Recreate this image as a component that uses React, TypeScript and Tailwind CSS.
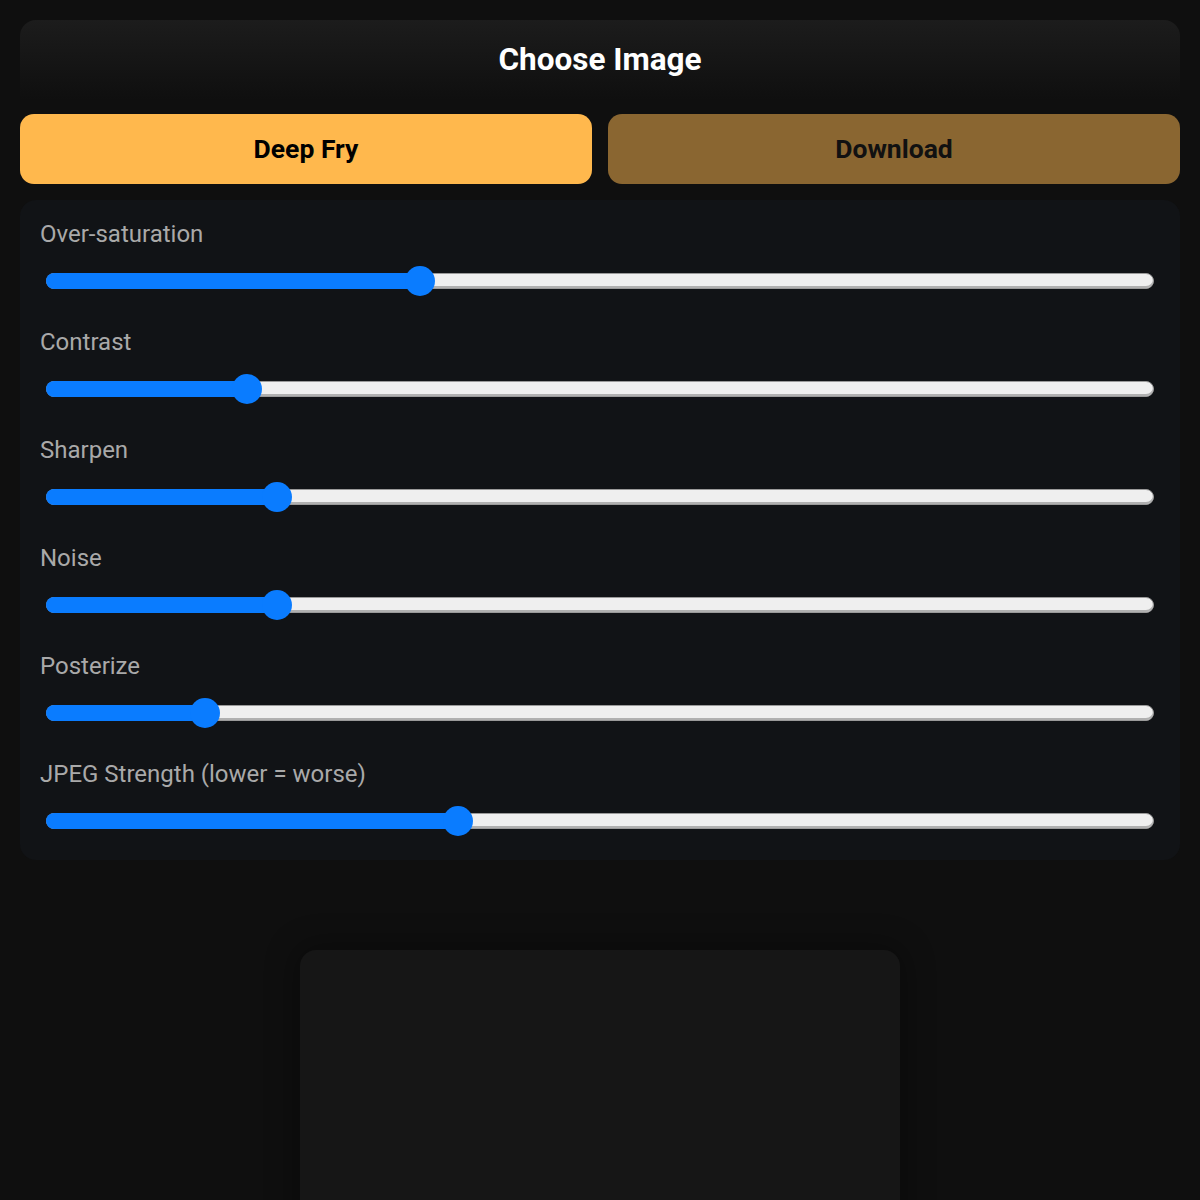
import React from "react";

const sliders = [
  { label: "Over-saturation", pct: 33.75 },
  { label: "Contrast", pct: 18.05 },
  { label: "Sharpen", pct: 20.76 },
  { label: "Noise", pct: 20.76 },
  { label: "Posterize", pct: 14.26 },
  { label: "JPEG Strength (lower = worse)", pct: 37.18 },
];

function Slider({ pct }: { pct: number }) {
  return (
    <div className="relative h-[30px] px-[6px] flex items-center">
      <div className="relative h-[16px] w-full rounded-full bg-[#efefef] border border-[#9a9a9a] shadow-[inset_0_-2px_0_#b0b0b0]">
        <div
          className="absolute left-[-1px] top-[-1px] bottom-[-1px] rounded-full bg-[#0a7cff]"
          style={{ width: `calc(${pct}% + 1px)` }}
        />
        <div
          className="absolute top-1/2 h-[30px] w-[30px] -translate-y-1/2 rounded-full bg-[#0a7cff]"
          style={{ left: `calc(${pct}% - 15px)` }}
        />
      </div>
    </div>
  );
}

export default function App() {
  return (
    <div
      className="h-[1200px] bg-[#0f0f0f] p-5 flex flex-col overflow-hidden"
      style={{ fontFamily: "Roboto, 'Liberation Sans', sans-serif" }}
    >
      <div className="h-20 shrink-0 rounded-t-2xl bg-gradient-to-b from-[#1c1c1c] to-[#0f0f0f] flex items-center justify-center">
        <span className="text-[31.5px] font-bold text-white">Choose Image</span>
      </div>

      <div className="mt-[14px] grid grid-cols-2 gap-4">
        <button className="h-[70px] rounded-[14px] bg-[#ffb84d] text-[26.5px] font-bold text-black">
          Deep Fry
        </button>
        <button className="h-[70px] rounded-[14px] bg-[#8a6631] text-[26.5px] font-bold text-[#111]">
          Download
        </button>
      </div>

      <div className="mt-4 rounded-2xl bg-[#111316] px-5 pt-5 pb-[24px] flex flex-col gap-[32px]">
        {sliders.map((s) => (
          <div key={s.label} className="flex flex-col gap-[18px]">
            <div className="h-7 leading-7 text-[24px] text-[#a9a9a9]">{s.label}</div>
            <Slider pct={s.pct} />
          </div>
        ))}
      </div>

      <div className="mt-[90px] flex justify-center">
        <div className="h-[400px] w-[600px] shrink-0 rounded-2xl bg-[#161616] shadow-[0_0_30px_6px_rgba(0,0,0,0.3)]" />
      </div>
    </div>
  );
}
